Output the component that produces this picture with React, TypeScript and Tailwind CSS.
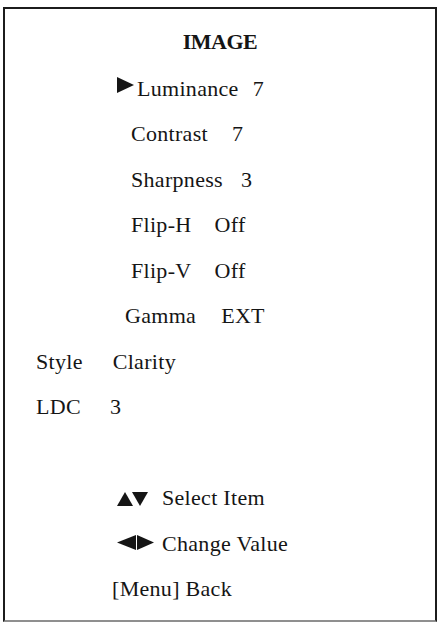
function Row({ indent, label, gap, value }: { indent: number; label: string; gap: number; value: string }) {
  return (
    <div className="flex h-[45.5px] leading-[45.5px] whitespace-pre" style={{ paddingLeft: indent }}>
      <span>{label}</span>
      <span style={{ marginLeft: gap }}>{value}</span>
    </div>
  )
}

export default function App() {
  return (
    <div className="w-[437px] h-[623px] bg-white pt-[7px] pl-[3px] overflow-hidden font-['Liberation_Serif','Times_New_Roman',serif]">
      <div className="w-[434px] h-[615px] border-2 border-[#1c1c1c] border-b-[#8f8f8f] text-[22px] text-[#151515]">
        {/* title */}
        <div className="pt-[10px] h-[56.6px] leading-[45.5px] text-center font-bold tracking-[-0.5px]">
          IMAGE
        </div>

        <div className="tracking-[0.3px]">
          {/* selected row */}
          <div className="flex h-[45.5px] leading-[45.5px] pl-[112px]">
            <svg className="self-start mt-[11.4px] shrink-0" width="17" height="16" viewBox="0 0 17 16">
              <polygon points="0,0 17,8 0,16" fill="#151515" />
            </svg>
            <span className="ml-[3px]">Luminance</span>
            <span className="ml-[14px]">7</span>
          </div>

          <Row indent={126} label="Contrast" gap={24} value="7" />
          <Row indent={126} label="Sharpness" gap={18} value="3" />
          <Row indent={126} label="Flip-H" gap={23} value="Off" />
          <Row indent={126} label="Flip-V" gap={23} value="Off" />
          <Row indent={120} label="Gamma" gap={25} value="EXT" />
          <Row indent={31} label="Style" gap={30} value="Clarity" />
          <Row indent={31} label="LDC" gap={29} value="3" />

          <div className="h-[45.5px]" />

          {/* help lines */}
          <div className="flex h-[45.5px] leading-[45.5px] pl-[112px]">
            <svg className="self-start mt-[17px] shrink-0" width="31" height="14" viewBox="0 0 31 14">
              <polygon points="0,14 8,0 16,14" fill="#151515" />
              <polygon points="15,0 31,0 23,14" fill="#151515" />
            </svg>
            <span className="ml-[14px]">Select Item</span>
          </div>
          <div className="flex h-[45.5px] leading-[45.5px] pl-[112px]">
            <svg className="self-start mt-[14.4px] shrink-0" width="37" height="15" viewBox="0 0 37 15">
              <polygon points="0,7.5 19,0 19,15" fill="#151515" />
              <polygon points="20,0 37,7.5 20,15" fill="#151515" />
            </svg>
            <span className="ml-[8px]">Change Value</span>
          </div>
          <div className="flex h-[45.5px] leading-[45.5px] pl-[107px]">
            <span>[Menu] Back</span>
          </div>
        </div>
      </div>
    </div>
  )
}
